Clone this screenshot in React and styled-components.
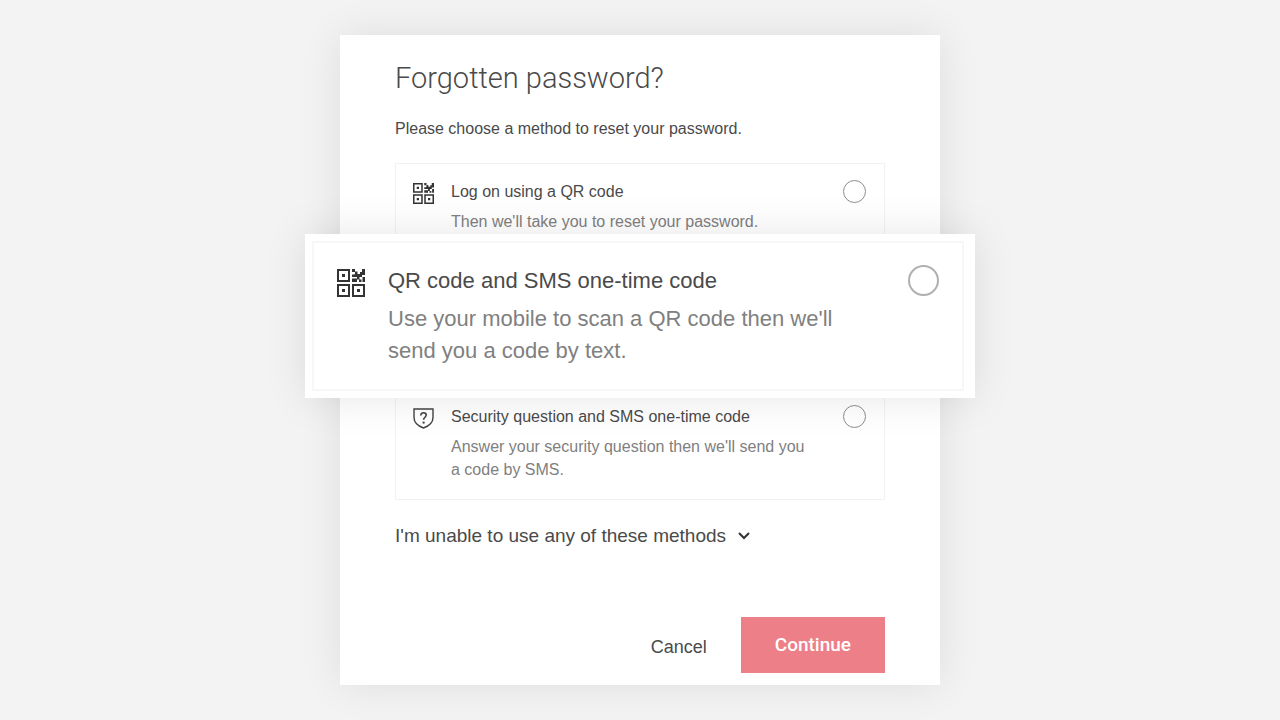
import React, { useState } from "react";
import styled, { createGlobalStyle } from "styled-components";

const methods = [
  {
    id: "qr",
    icon: "qr",
    title: "Log on using a QR code",
    text: "Then we'll take you to reset your password.",
  },
  {
    id: "qr-sms",
    icon: "qr",
    title: "QR code and SMS one-time code",
    text: "Use your mobile to scan a QR code then we'll send you a code by text.",
    large: true,
  },
  {
    id: "question-sms",
    icon: "shield",
    title: "Security question and SMS one-time code",
    text: "Answer your security question then we'll send you a code by SMS.",
  },
];

function QrIcon() {
  return (
    <svg viewBox="0 0 28 28" fill="#333" aria-hidden="true">
      <path
        fillRule="evenodd"
        d="M0 0h13v13H0zM2 2v9h9V2zM5 5h3v3H5zM0 15h13v13H0zM2 17v9h9v-9zM5 20h3v3H5zM15 15h13v13H15zM17 17v9h9v-9zM20 20h3v3h-3z"
      />
      <path d="M15 0h3v2.500h2.500v2.500H23V3h2V0h3v6h-3v2h-2.500v2.500H20V8h-2.500V5H18V3h-3zM15 5.500h2.500V8H15zM15 9.500h5V13h-5zM22 10.500h2.500V13H22zM25.500 8H28v5h-2.500z" />
    </svg>
  );
}

function ShieldIcon() {
  return (
    <svg viewBox="0 0 21 21" fill="none" stroke="#444" strokeWidth="1.4" aria-hidden="true">
      <path d="M1 1h19v8.500c0 5-4 8.500-9.500 10.500C5 18 1 14.500 1 9.500z" />
      <path strokeWidth="1.600" d="M7.800 7.400c0-1.700 1.100-2.700 2.700-2.700s2.700 1 2.700 2.400c0 2-2.600 2.300-2.600 4.700" />
      <path strokeWidth="2" d="M9.600 14.600h2" />
    </svg>
  );
}

function Method({ item, checked, onChange }) {
  return (
    <MethodFrame $large={item.large}>
      <MethodLabel $large={item.large}>
        <IconBox $large={item.large}>
          {item.icon === "qr" ? <QrIcon /> : <ShieldIcon />}
        </IconBox>
        <MethodBody>
          <MethodTitle $large={item.large}>{item.title}</MethodTitle>
          <MethodText $large={item.large}>{item.text}</MethodText>
        </MethodBody>
        <Radio
          type="radio"
          name="method"
          value={item.id}
          $large={item.large}
          checked={checked}
          onChange={onChange}
        />
      </MethodLabel>
    </MethodFrame>
  );
}

function App() {
  const [selected, setSelected] = useState("");

  return (
    <Page>
      <GlobalStyle />
      <Card>
        <Title>Forgotten password?</Title>
        <Intro id="intro">Please choose a method to reset your password.</Intro>
        <MethodList role="radiogroup" aria-labelledby="intro">
          {methods.map((item) => (
            <Method
              key={item.id}
              item={item}
              checked={selected === item.id}
              onChange={() => setSelected(item.id)}
            />
          ))}
        </MethodList>
        <UnableBtn type="button">
          I'm unable to use any of these methods
          <svg width="12" height="8" viewBox="0 0 12 8" fill="none" stroke="#333" strokeWidth="2" aria-hidden="true">
            <path d="M1 1l5 5 5-5" />
          </svg>
        </UnableBtn>
        <Actions>
          <CancelBtn type="button">Cancel</CancelBtn>
          <ContinueBtn type="button">Continue</ContinueBtn>
        </Actions>
      </Card>
    </Page>
  );
}

export default App;

const GlobalStyle = createGlobalStyle`
  * {
    box-sizing: border-box;
  }

  body {
    margin: 0;
    background-color: #f3f3f3;
    color: #4a4a4a;
    font-family: "Liberation Sans", Arial, sans-serif;
  }

  button {
    font-family: inherit;
    color: inherit;
    cursor: pointer;
  }
`;

const Page = styled.div`
  min-height: 100vh;
  display: flex;
  align-items: center;
  justify-content: center;
`;

const Card = styled.main`
  width: 100%;
  max-width: 600px;
  padding: 23px 55px 12px;
  display: flex;
  flex-direction: column;
  background-color: #fff;
  box-shadow: 0 0 40px rgba(0, 0, 0, 0.09);
`;

const Title = styled.h1`
  margin: 0;
  font-family: Roboto, "Liberation Sans", sans-serif;
  font-size: 29px;
  font-weight: 300;
  line-height: 40px;
`;

const Intro = styled.p`
  margin: 19px 0 22px;
  font-size: 16px;
  line-height: 24px;
`;

const MethodList = styled.div`
  border: 1px solid #f2f2f2;
`;

const MethodFrame = styled.div`
  ${({ $large }) =>
    $large &&
    `
    position: relative;
    margin: 0 -91px;
    padding: 7px 11px 7px 7px;
    background-color: #fff;
    box-shadow: 0 0 40px rgba(0, 0, 0, 0.1);
  `}

  &:first-child {
    padding: 9px 0 1px;
  }

  &:last-child {
    padding-bottom: 18px;
  }
`;

const MethodLabel = styled.label`
  display: flex;
  align-items: flex-start;
  gap: ${({ $large }) => ($large ? "23px" : "17px")};
  padding: ${({ $large }) => ($large ? "22px 23px 22px" : "7px 18px 0 17px")};
  border: ${({ $large }) => ($large ? "2px solid #f7f7f7" : "0")};
  cursor: pointer;
`;

const IconBox = styled.span`
  flex: none;
  width: ${({ $large }) => ($large ? "28px" : "21px")};
  margin-top: ${({ $large }) => ($large ? "4px" : "3px")};

  svg {
    display: block;
    width: 100%;
  }
`;

const MethodBody = styled.span`
  flex: 1;
  padding-right: 4%;
`;

const MethodTitle = styled.span`
  display: block;
  font-size: ${({ $large }) => ($large ? "22px" : "16px")};
  line-height: ${({ $large }) => ($large ? "32px" : "24px")};
`;

const MethodText = styled.span`
  display: block;
  margin-top: 6px;
  color: #808080;
  font-size: ${({ $large }) => ($large ? "22px" : "16px")};
  line-height: ${({ $large }) => ($large ? "32px" : "23px")};
`;

const Radio = styled.input`
  appearance: none;
  flex: none;
  width: ${({ $large }) => ($large ? "31px" : "23px")};
  height: ${({ $large }) => ($large ? "31px" : "23px")};
  margin: 0;
  border: ${({ $large }) => ($large ? "2px solid #b0b0b0" : "1px solid #8c8c8c")};
  border-radius: 50%;
  background-color: #fff;
  cursor: pointer;

  &:checked {
    border-width: 7px;
    border-color: #333;
  }
`;

const UnableBtn = styled.button`
  align-self: flex-start;
  display: flex;
  align-items: center;
  gap: 12px;
  margin-top: 24px;
  padding: 0;
  border: 0;
  background: none;
  font-size: 19px;
  line-height: 24px;
`;

const Actions = styled.div`
  display: flex;
  align-items: center;
  justify-content: flex-end;
  gap: 34px;
  margin-top: 69px;
`;

const CancelBtn = styled.button`
  padding: 4px 0 0;
  border: 0;
  background: none;
  font-size: 18px;
  line-height: 24px;
`;

const ContinueBtn = styled.button`
  padding: 16px 34px;
  border: 0;
  background-color: #ed7f88;
  && {
    color: #fff;
    font-family: Roboto, "Liberation Sans", sans-serif;
  }
  font-size: 19px;
  font-weight: 500;
  line-height: 24px;
`;
